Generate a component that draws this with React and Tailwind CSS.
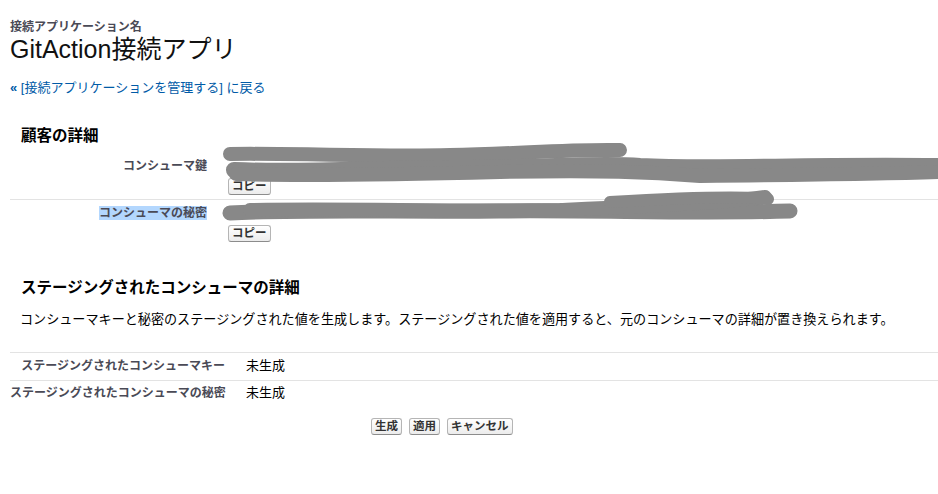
import React from "react";

const font = "font-['Liberation_Sans','Noto_Sans_CJK_JP',sans-serif]";

function Btn({ children, className = "" }) {
  return (
    <button
      className={`h-[17px] px-[3px] text-[11.5px] leading-[15px] font-bold text-[#333] border border-[#b5b5b5] border-b-[#8c8c8c] rounded-[3px] bg-gradient-to-b from-white to-[#ececec] ${className}`}
    >
      {children}
    </button>
  );
}

function Scribbles() {
  // redaction marks drawn over the consumer key / secret values
  return (
    <svg
      className="absolute left-0 top-0 pointer-events-none"
      width="938"
      height="260"
      viewBox="0 0 938 260"
    >
      <g fill="none" stroke="#888888" strokeLinecap="round" strokeLinejoin="round">
        <path strokeWidth="14" d="M230 154 C300 153 380 157 450 155 C520 154 560 149 620 150" />
        <path strokeWidth="16" d="M234 170 C300 173 380 168 460 168 C560 167 600 163 640 166 C720 170 800 164 940 166" />
        <path strokeWidth="14" d="M236 174 C300 176 420 174 500 172 C600 170 650 172 700 176 C800 175 880 174 940 172" />
        <path strokeWidth="15" d="M230 213 C300 209 400 212 500 211 C600 210 700 214 790 211" />
        <path strokeWidth="14" d="M250 210 C350 208 450 212 560 210 C650 206 720 203 765 197" />
        <path strokeWidth="12" d="M610 202 C680 198 740 196 768 199" />
      </g>
    </svg>
  );
}

export default function App() {
  return (
    <div className={`${font} relative w-[938px] h-[494px] bg-white overflow-hidden pl-[10px] pt-[20px]`}>
      <div className="text-[12px] leading-[14px] font-bold text-[#4a4a56]">接続アプリケーション名</div>
      <div className="text-[25px] leading-[30px] text-[#111]">GitAction接続アプリ</div>
      <div className="mt-[16px] text-[13px] leading-[16px] text-[#015ba7]">
        <span className="font-bold">«</span> [接続アプリケーションを管理する] に戻る
      </div>

      <div className="mt-[30px] pl-[11px] text-[15.5px] leading-[20px] font-bold text-black">顧客の詳細</div>

      <div className="flex border-b border-[#e3e3e3]">
        <div className="w-[201px] pr-[4px] pt-[13px] text-right text-[12px] leading-[14px] font-bold text-[#4a4a56]">
          コンシューマ鍵
        </div>
        <div className="ml-[17px] pt-[13px] pb-[4px] flex flex-col items-start">
          <div className="h-[16px]" />
          <Btn className="mt-[3px]">コピー</Btn>
        </div>
      </div>
      <div className="flex">
        <div className="w-[201px] pr-[4px] pt-[6px] text-right text-[12px] leading-[14px] font-bold text-[#4a4a56]">
          <span className="bg-[#b3d7fe]">コンシューマの秘密</span>
        </div>
        <div className="ml-[17px] pt-[6px] pb-[4px] flex flex-col items-start">
          <div className="h-[16px]" />
          <Btn className="mt-[3px]">コピー</Btn>
        </div>
      </div>

      <div className="mt-[32px] pl-[11px] text-[15.5px] leading-[20px] font-bold text-black">
        ステージングされたコンシューマの詳細
      </div>
      <div className="mt-[13px] pl-[10px] text-[13.1px] leading-[18px] text-black whitespace-nowrap">
        コンシューマキーと秘密のステージングされた値を生成します。ステージングされた値を適用すると、元のコンシューマの詳細が置き換えられます。
      </div>

      <div className="mt-[23px] border-t border-[#e3e3e3]">
        <div className="flex border-b border-[#e3e3e3] pt-[5px] pb-[6px]">
          <div className="w-[219px] pr-[4px] text-right whitespace-nowrap text-[12px] leading-[16px] font-bold text-[#4a4a56]">
            ステージングされたコンシューマキー
          </div>
          <div className="ml-[17px] text-[13px] leading-[16px] text-black">未生成</div>
        </div>
        <div className="flex pt-[4px] pb-[6px]">
          <div className="w-[219px] pr-[4px] text-right whitespace-nowrap text-[12px] leading-[16px] font-bold text-[#4a4a56]">
            ステージングされたコンシューマの秘密
          </div>
          <div className="ml-[17px] text-[13px] leading-[16px] text-black">未生成</div>
        </div>
      </div>

      <div className="mt-[11px] ml-[361px] flex gap-[7px]">
        <Btn>生成</Btn>
        <Btn>適用</Btn>
        <Btn>キャンセル</Btn>
      </div>

      <Scribbles />
    </div>
  );
}
